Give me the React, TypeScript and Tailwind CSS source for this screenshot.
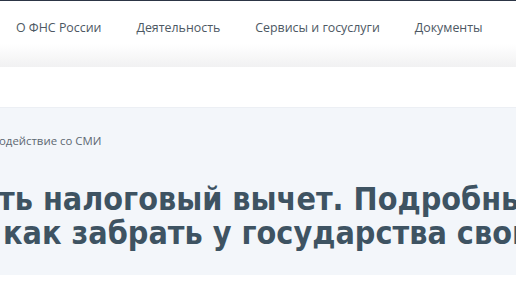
const navItems = ["О ФНС России", "Деятельность", "Сервисы и госуслуги", "Документы"]

export default function App() {
  return (
    <div className="w-[516px] h-[290px] overflow-hidden bg-white font-['Open_Sans',sans-serif]">
      <div className="h-[1px] bg-[#2c3545]" />
      <header className="h-[66px] bg-gradient-to-b from-white from-65% to-[#f1f1f2]">
        <nav className="flex gap-[35px] pl-4 pt-[17px] text-[12.4px] leading-[20px] text-[#4d5863] whitespace-nowrap">
          {navItems.map((item) => (
            <span key={item}>{item}</span>
          ))}
        </nav>
      </header>
      <div className="h-[40px]" />
      <section className="h-[168px] bg-[#f3f6fa] border-t border-[#eceff4]">
        <div className="pt-[25px] -ml-[1px] text-[11.4px] leading-[16px] text-[#5d6872] whitespace-nowrap">
          одействие со СМИ
        </div>
        <h1 className="mt-[33px] font-['DejaVu_Sans_Condensed',sans-serif] font-bold text-[32px] leading-[34px] text-[#3e5362] whitespace-nowrap">
          <div className="-ml-[2px]">ть налоговый вычет. Подробные</div>
          <div className="ml-[3px]">как забрать у государства свои деньги</div>
        </h1>
      </section>
    </div>
  )
}
